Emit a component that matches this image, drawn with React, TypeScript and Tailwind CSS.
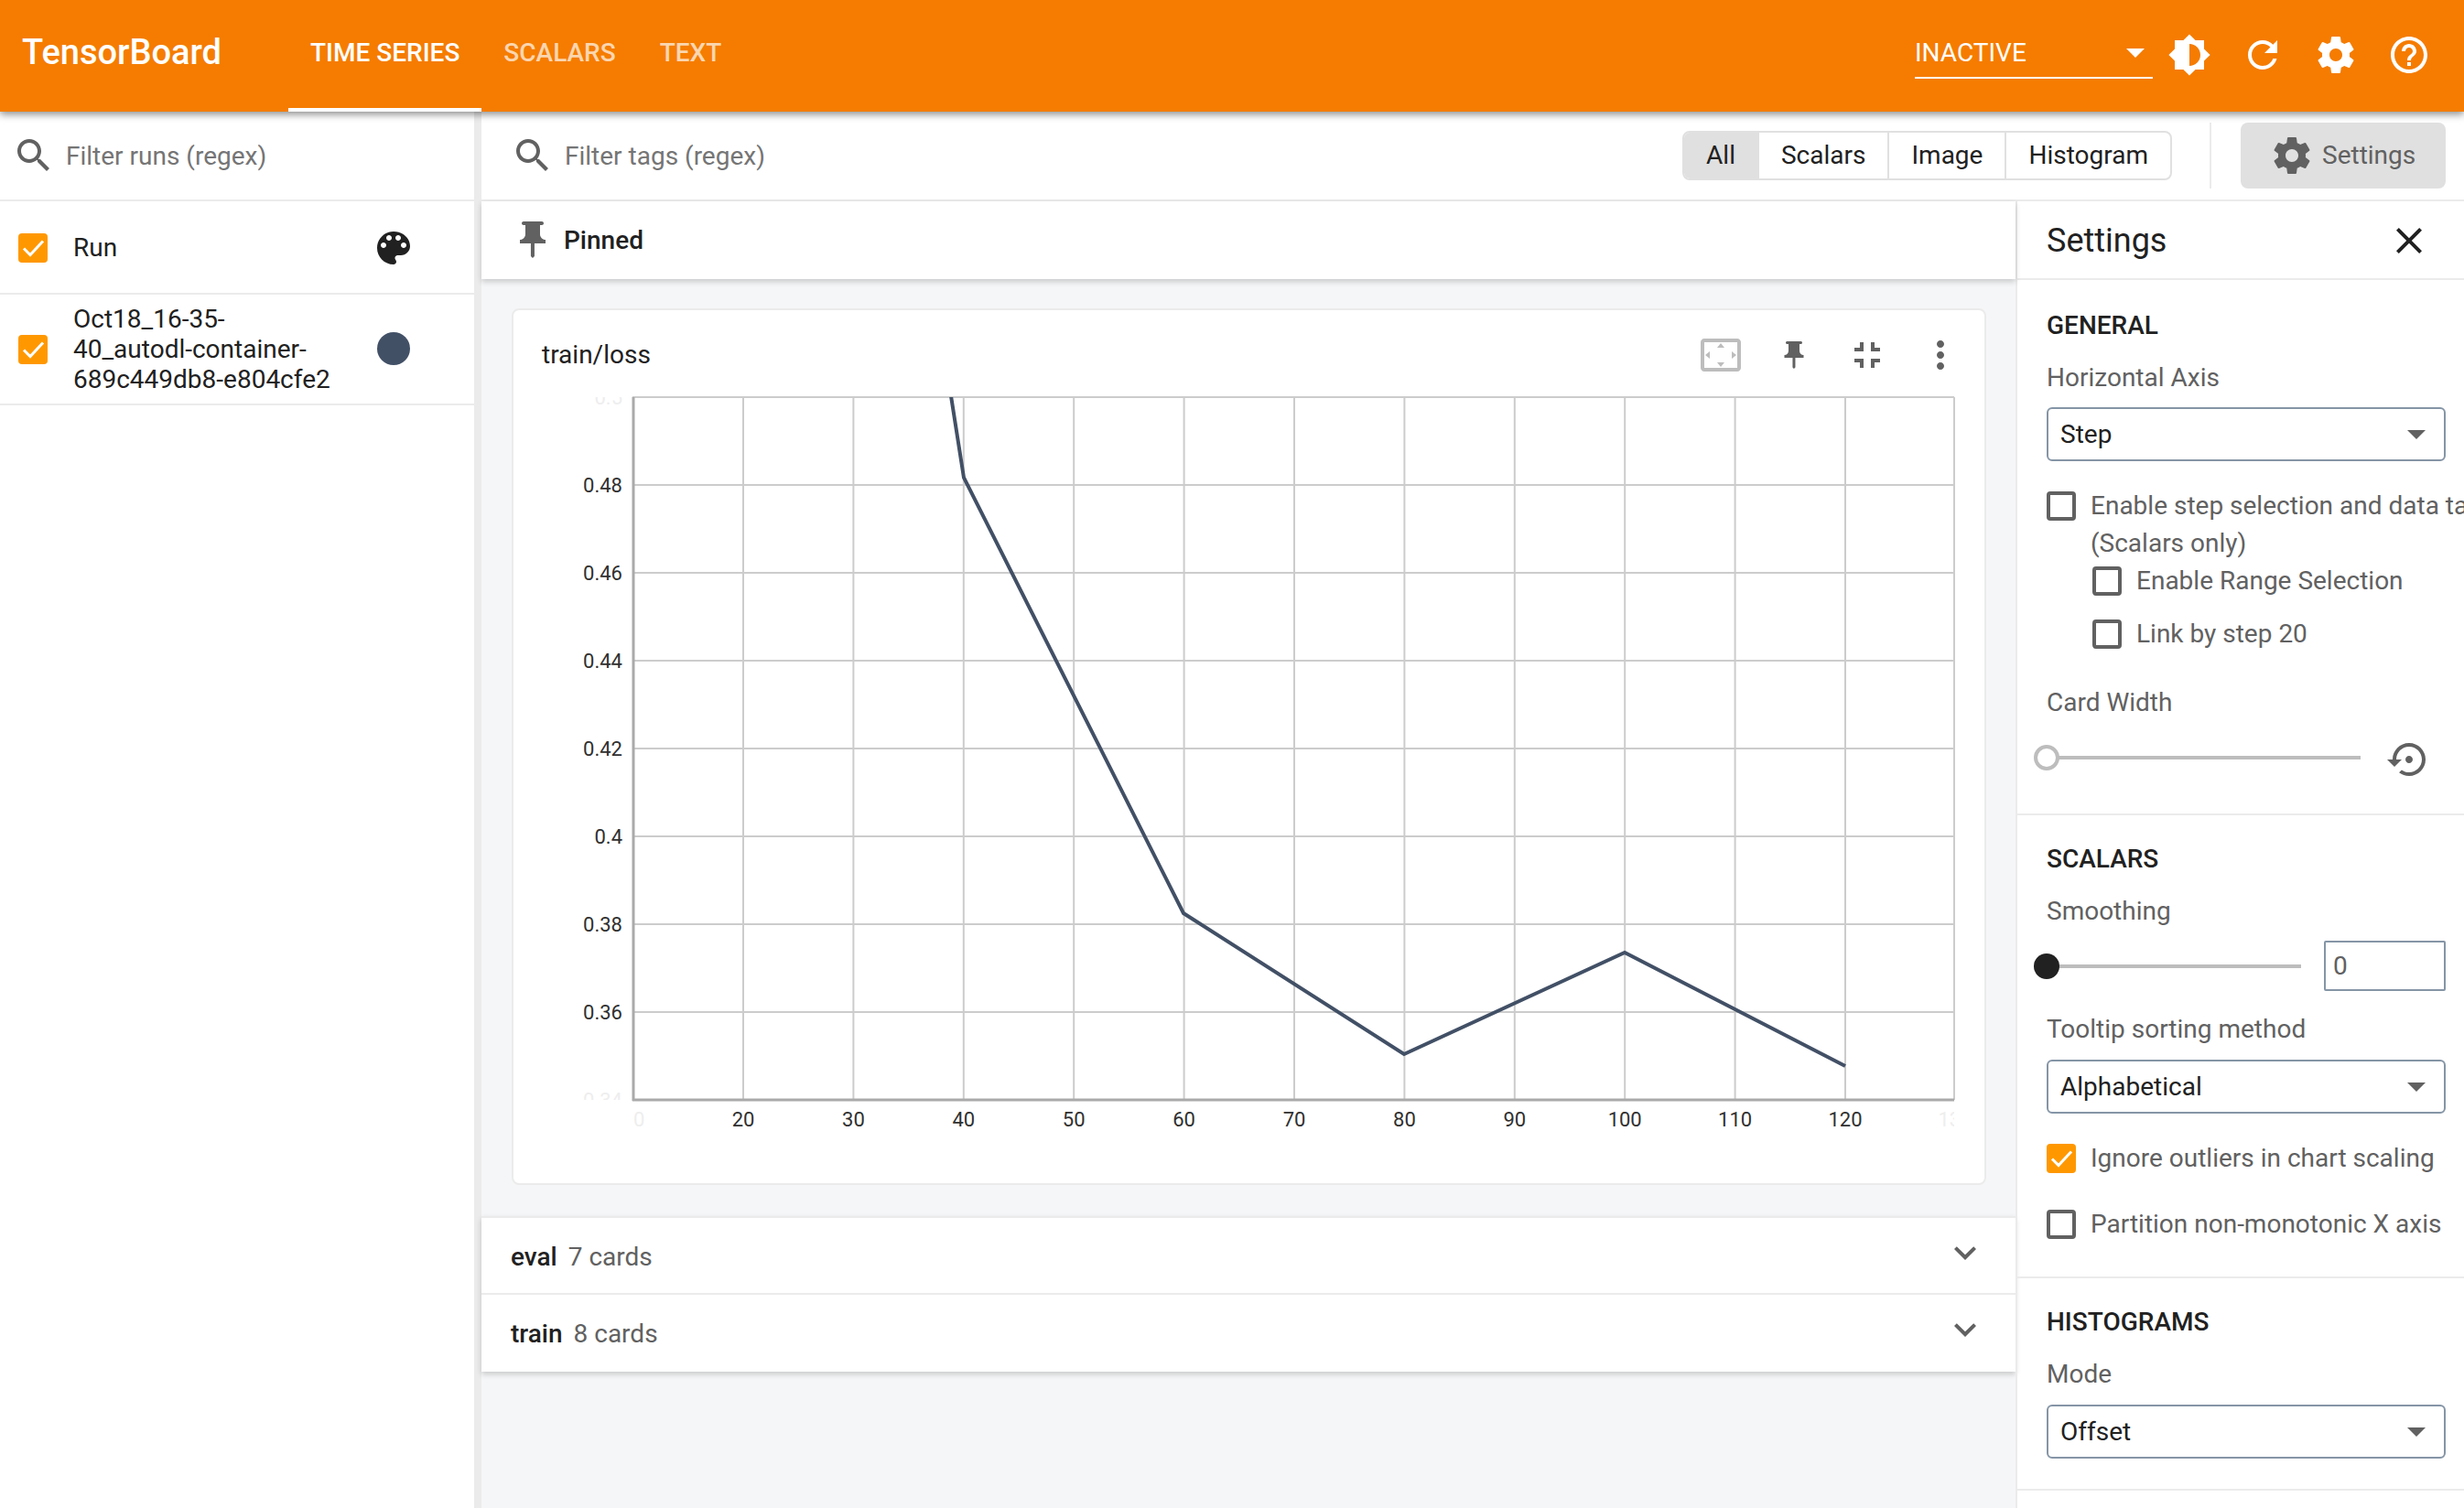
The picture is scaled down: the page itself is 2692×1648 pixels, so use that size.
import type { ReactNode } from 'react';

const paths = {
  search: 'M15.5 14h-.79l-.28-.27C15.41 12.59 16 11.11 16 9.5 16 5.91 13.09 3 9.5 3S3 5.91 3 9.5 5.91 16 9.5 16c1.61 0 3.09-.59 4.23-1.57l.27.28v.79l5 4.99L20.49 19l-4.99-5zm-6 0C7.01 14 5 11.99 5 9.5S7.01 5 9.5 5 14 7.01 14 9.5 11.99 14 9.5 14z',
  brightness: 'M20 15.31L23.31 12 20 8.69V4h-4.69L12 .69 8.69 4H4v4.69L.69 12 4 15.31V20h4.69L12 23.31 15.31 20H20v-4.69zM12 18V6c3.31 0 6 2.69 6 6s-2.69 6-6 6z',
  refresh: 'M17.65 6.35C16.2 4.9 14.21 4 12 4c-4.42 0-7.99 3.58-7.99 8s3.57 8 7.99 8c3.73 0 6.84-2.55 7.73-6h-2.08c-.82 2.33-3.04 4-5.65 4-3.31 0-6-2.69-6-6s2.69-6 6-6c1.66 0 3.14.69 4.22 1.78L13 11h7V4l-2.35 2.35z',
  gear: 'M19.43 12.98c.04-.32.07-.64.07-.98s-.03-.66-.07-.98l2.11-1.65c.19-.15.24-.42.12-.64l-2-3.46c-.12-.22-.39-.3-.61-.22l-2.49 1c-.52-.4-1.08-.73-1.69-.98l-.38-2.65C14.46 2.18 14.25 2 14 2h-4c-.25 0-.46.18-.49.42l-.38 2.65c-.61.25-1.17.59-1.69.98l-2.49-1c-.23-.09-.49 0-.61.22l-2 3.46c-.13.22-.07.49.12.64l2.11 1.65c-.04.32-.07.65-.07.98s.03.66.07.98l-2.11 1.65c-.19.15-.24.42-.12.64l2 3.46c.12.22.39.3.61.22l2.49-1c.52.4 1.08.73 1.69.98l.38 2.65c.03.24.24.42.49.42h4c.25 0 .46-.18.49-.42l.38-2.65c.61-.25 1.17-.59 1.69-.98l2.49 1c.23.09.49 0 .61-.22l2-3.46c.12-.22.07-.49-.12-.64l-2.11-1.65zM12 15.5c-1.93 0-3.5-1.57-3.5-3.5s1.57-3.5 3.5-3.5 3.5 1.57 3.5 3.5-1.57 3.5-3.5 3.5z',
  help: 'M11 18h2v-2h-2v2zm1-16C6.48 2 2 6.48 2 12s4.48 10 10 10 10-4.48 10-10S17.52 2 12 2zm0 18c-4.41 0-8-3.59-8-8s3.59-8 8-8 8 3.59 8 8-3.59 8-8 8zm0-14c-2.21 0-4 1.79-4 4h2c0-1.1.9-2 2-2s2 .9 2 2c0 2-3 1.75-3 5h2c0-2.25 3-2.5 3-5 0-2.21-1.79-4-4-4z',
  palette: 'M12 3c-4.97 0-9 4.03-9 9s4.03 9 9 9c.83 0 1.5-.67 1.5-1.5 0-.39-.15-.74-.39-1.01-.23-.26-.38-.61-.38-.99 0-.83.67-1.5 1.5-1.5H16c2.76 0 5-2.24 5-5 0-4.42-4.03-8-9-8zm-5.5 9c-.83 0-1.5-.67-1.5-1.5S5.67 9 6.5 9 8 9.67 8 10.5 7.33 12 6.5 12zm3-4C8.67 8 8 7.33 8 6.5S8.67 5 9.5 5s1.5.67 1.5 1.5S10.33 8 9.5 8zm5 0c-.83 0-1.5-.67-1.5-1.5S13.67 5 14.5 5s1.5.67 1.5 1.5S15.33 8 14.5 8zm3 4c-.83 0-1.5-.67-1.5-1.5S16.67 9 17.5 9s1.5.67 1.5 1.5-.67 1.5-1.5 1.5z',
  pin: 'M16 9V4l1 0c.55 0 1-.45 1-1s-.45-1-1-1H7C6.45 2 6 2.45 6 3s.45 1 1 1l1 0v5c0 1.66-1.34 3-3 3v2h5.97v7l1 1 1-1v-7H19v-2C17.34 12 16 10.66 16 9z',
  collapse: 'M5 16h3v3h2v-5H5v2zm3-8H5v2h5V5H8v3zm6 11h2v-3h3v-2h-5v5zm2-11V5h-2v5h5V8h-3z',
  more: 'M12 8c1.1 0 2-.9 2-2s-.9-2-2-2-2 .9-2 2 .9 2 2 2zm0 2c-1.1 0-2 .9-2 2s.9 2 2 2 2-.9 2-2-.9-2-2-2zm0 6c-1.1 0-2 .9-2 2s.9 2 2 2 2-.9 2-2-.9-2-2-2z',
  close: 'M19 6.41L17.59 5 12 10.59 6.41 5 5 6.41 10.59 12 5 17.59 6.41 19 12 13.41 17.59 19 19 17.59 13.41 12z',
  chevron: 'M16.59 8.59L12 13.17 7.41 8.59 6 10l6 6 6-6z',
  reset: 'M14 12c0-1.1-.9-2-2-2s-2 .9-2 2 .9 2 2 2 2-.9 2-2zm-2-9c-4.97 0-9 4.03-9 9H0l4 4 4-4H5c0-3.87 3.13-7 7-7s7 3.13 7 7-3.13 7-7 7c-1.51 0-2.91-.49-4.06-1.3l-1.42 1.44C8.04 20.3 9.94 21 12 21c4.97 0 9-4.03 9-9s-4.03-9-9-9z',
  overscan: 'M12.01 5.5L10 8h4l-1.99-2.5zM18 10v4l2.5-1.99L18 10zM6 10l-2.5 2.01L6 14v-4zm8 6h-4l2.01 2.5L14 16zm7-13H3c-1.1 0-2 .9-2 2v14c0 1.1.9 2 2 2h18c1.1 0 2-.9 2-2V5c0-1.1-.9-2-2-2zm0 16.01H3V4.99h18v14.02z',
};

function Icon({ name, className }: { name: keyof typeof paths; className: string }) {
  return (
    <svg viewBox="0 0 24 24" className={className} fill="currentColor">
      <path d={paths[name]} />
    </svg>
  );
}

function Checkbox({ checked = false }: { checked?: boolean }) {
  if (checked) {
    return (
      <span className="block w-[32px] h-[32px] shrink-0 rounded-[4px] bg-[#ff9800]">
        <svg viewBox="0 0 32 32" className="w-[32px] h-[32px]" fill="none" stroke="#fff" strokeWidth="3">
          <path d="M6 16.5 L13 23.5 L27 8.5" />
        </svg>
      </span>
    );
  }
  return <span className="block w-[32px] h-[32px] shrink-0 rounded-[4px] border-[4px] border-[#616161] bg-white" />;
}

function SelectBox({ value, className }: { value: string; className: string }) {
  return (
    <div className={`h-[59px] w-[436px] rounded-[6px] border-2 border-[#8595a6] flex items-center justify-between pl-[13px] pr-[20px] text-[#212121] ${className}`}>
      <span>{value}</span>
      <span className="w-0 h-0 border-l-[10px] border-r-[10px] border-t-[10px] border-l-transparent border-r-transparent border-t-[#616161]" />
    </div>
  );
}

function Heading({ children }: { children: ReactNode }) {
  return <div className="h-[36px] leading-[36px] font-medium text-[#212121]">{children}</div>;
}

function Label({ children, className }: { children: ReactNode; className: string }) {
  return <div className={`h-[36px] leading-[36px] text-[#616161] ${className}`}>{children}</div>;
}

function CheckRow({ label, checked, className }: { label: string; checked?: boolean; className: string }) {
  return (
    <div className={`flex items-start gap-[16px] leading-[41px] text-[#616161] whitespace-nowrap ${className}`}>
      <div className="pt-[5px]">
        <Checkbox checked={checked} />
      </div>
      <span>{label}</span>
    </div>
  );
}

function TagFilter({ label, active, last }: { label: string; active?: boolean; last?: boolean }) {
  return (
    <div className={`h-full px-[24px] flex items-center text-[#212121] ${active ? 'bg-[#e0e0e0]' : ''} ${last ? '' : 'border-r-2 border-[#e0e0e0]'}`}>
      {label}
    </div>
  );
}

function Group({ name, count, className }: { name: string; count: string; className: string }) {
  return (
    <div className={`h-[84px] flex items-center pl-[32px] pr-[31px] ${className}`}>
      <span className="font-medium text-[#212121] mr-[12px]">{name}</span>
      <span className="text-[#616161]">{count}</span>
      <Icon name="chevron" className="w-[48px] h-[48px] ml-auto text-[#616161] -mt-[10px]" />
    </div>
  );
}

const yTicks = [
  { label: '0.48', y: 530 },
  { label: '0.46', y: 626 },
  { label: '0.44', y: 722 },
  { label: '0.42', y: 818 },
  { label: '0.4', y: 914 },
  { label: '0.38', y: 1010 },
  { label: '0.36', y: 1106 },
];
const xTicks = [20, 30, 40, 50, 60, 70, 80, 90, 100, 110, 120];
const xOf = (v: number) => 812 + (v - 20) * 12.04;

function LossChart() {
  return (
    <svg viewBox="561 420 1606 820" className="w-[1606px] h-[820px] block" style={{ fontFamily: 'Roboto, sans-serif' }}>
      <defs>
        <clipPath id="plot-y"><rect x="561" y="434" width="130" height="768" /></clipPath>
        <clipPath id="plot-x"><rect x="691" y="1204" width="1444" height="40" /></clipPath>
        <clipPath id="plot-line"><rect x="691" y="434" width="1444" height="768" /></clipPath>
      </defs>
      {yTicks.map(t => (
        <line key={t.label} x1="691" x2="2135" y1={t.y} y2={t.y} stroke="#cccccc" strokeWidth="2" />
      ))}
      {xTicks.map(t => (
        <line key={t} x1={xOf(t)} x2={xOf(t)} y1="434" y2="1202" stroke="#cccccc" strokeWidth="2" />
      ))}
      <line x1="691" x2="2135" y1="434" y2="434" stroke="#cccccc" strokeWidth="2" />
      <line x1="2135" x2="2135" y1="434" y2="1202" stroke="#cccccc" strokeWidth="2" />
      <line x1="692" x2="692" y1="434" y2="1203" stroke="#aaaaaa" strokeWidth="3" />
      <line x1="691" x2="2135" y1="1202" y2="1202" stroke="#aaaaaa" strokeWidth="3" />
      <polyline
        clipPath="url(#plot-line)"
        points="1037,420 1053,522 1293,998 1534,1152 1775,1041 2016,1165"
        fill="none"
        stroke="#425066"
        strokeWidth="4"
      />
      <g fontSize="22" fill="#303030" textAnchor="end">
        {yTicks.map(t => (
          <text key={t.label} x="680" y={t.y + 8}>{t.label}</text>
        ))}
      </g>
      <g clipPath="url(#plot-y)" fontSize="22" fill="#eeeeee" textAnchor="end">
        <text x="680" y="442">0.5</text>
        <text x="680" y="1210">0.34</text>
      </g>
      <g fontSize="22" fill="#303030" textAnchor="middle">
        {xTicks.map(t => (
          <text key={t} x={xOf(t)} y="1231">{t}</text>
        ))}
      </g>
      <g clipPath="url(#plot-x)" fontSize="22" fill="#eeeeee" textAnchor="middle">
        <text x="692" y="1231">10</text>
        <text x="2136" y="1231">130</text>
      </g>
    </svg>
  );
}

export default function App() {
  return (
    <div className="w-[2692px] h-[1648px] flex flex-col overflow-hidden bg-white text-[28px] font-['Roboto',sans-serif]">
      <header className="relative z-20 h-[122px] shrink-0 bg-[#f57c00] text-white flex items-start shadow-[0_3px_8px_rgba(0,0,0,0.45)]">
        <div className="pl-[24px] w-[315px] h-[114px] flex items-center text-[38px] font-medium">TensorBoard</div>
        <div className="h-[122px] px-[24px] pb-[2px] flex items-center font-medium border-b-[4px] border-white">TIME SERIES</div>
        <div className="h-[122px] px-[24px] pb-[6px] flex items-center font-medium text-white/70">SCALARS</div>
        <div className="h-[122px] px-[24px] pb-[6px] flex items-center font-medium text-white/70">TEXT</div>
        <div className="ml-auto flex items-center pr-[36px] h-[120px]">
          <div className="w-[260px] h-[48px] mt-[4px] mr-[16px] border-b-2 border-white flex items-center justify-between pr-[9px] pb-[6px]">
            <span>INACTIVE</span>
            <span className="w-0 h-0 border-l-[10px] border-r-[10px] border-t-[10px] border-l-transparent border-r-transparent border-t-white" />
          </div>
          <Icon name="brightness" className="w-[48px] h-[48px] mr-[32px]" />
          <Icon name="refresh" className="w-[48px] h-[48px] mr-[32px]" />
          <Icon name="gear" className="w-[48px] h-[48px] mr-[32px]" />
          <Icon name="help" className="w-[48px] h-[48px]" />
        </div>
      </header>

      <div className="flex flex-1 min-h-0">
        <aside className="w-[518px] shrink-0 flex flex-col">
          <div className="h-[98px] border-b-2 border-[#ebebeb] flex items-center pl-[13px] text-[#757575]">
            <Icon name="search" className="w-[48px] h-[48px] text-[#616161] mr-[11px]" />
            <span className="mt-[2px]">Filter runs (regex)</span>
          </div>
          <div className="h-[102px] border-b-2 border-[#ebebeb] flex items-center pl-[20px] pr-[64px] pt-[2px] text-[#212121]">
            <Checkbox checked />
            <span className="ml-[28px]">Run</span>
            <Icon name="palette" className="w-[48px] h-[48px] ml-auto" />
          </div>
          <div className="h-[121px] border-b-2 border-[#ebebeb] flex items-center pl-[20px] pr-[70px] text-[#212121]">
            <Checkbox checked />
            <span className="ml-[28px] leading-[33px] w-[300px]">Oct18_16-35-<br />40_autodl-container-<br />689c449db8-e804cfe2</span>
            <span className="ml-auto w-[36px] h-[36px] rounded-full bg-[#425066] -mt-[2px]" />
          </div>
        </aside>
        <div className="w-[8px] shrink-0 bg-[#ebebeb]" />

        <main className="flex-1 min-w-0 flex flex-col">
          <div className="h-[98px] shrink-0 border-b-2 border-[#ebebeb] flex items-center pl-[32px] pr-[20px]">
            <Icon name="search" className="w-[48px] h-[48px] text-[#616161] mr-[11px]" />
            <span className="text-[#757575] mt-[2px]">Filter tags (regex)</span>
            <div className="ml-auto h-[54px] flex items-center rounded-[8px] border-2 border-[#e0e0e0] overflow-hidden">
              <TagFilter label="All" active />
              <TagFilter label="Scalars" />
              <TagFilter label="Image" />
              <TagFilter label="Histogram" last />
            </div>
            <div className="w-[2px] h-[72px] bg-[#ebebeb] ml-[41px] mr-[32px]" />
            <div className="w-[224px] h-[72px] rounded-[8px] bg-[#e0e0e0] flex items-center pl-[32px] text-[#616161]">
              <Icon name="gear" className="w-[48px] h-[48px] mr-[9px]" />
              Settings
            </div>
          </div>

          <div className="flex flex-1 min-h-0">
            <section className="w-[1676px] shrink-0 bg-[#f5f6f7] flex flex-col">
              <div className="relative z-10 h-[85px] shrink-0 bg-white flex items-center pl-[32px] shadow-[0_3px_6px_rgba(0,0,0,0.18)]">
                <Icon name="pin" className="w-[48px] h-[48px] text-[#616161] mr-[10px] -mt-[2px]" />
                <span className="font-medium text-[#212121]">Pinned</span>
              </div>
              <div className="mt-[32px] ml-[33px] mr-[32px] h-[958px] shrink-0 rounded-[8px] border-2 border-[#ebebeb] bg-white">
                <div className="h-[81px] flex items-center pl-[31px] pr-[24px] pt-[17px]">
                  <span className="text-[#212121]">train/loss</span>
                  <Icon name="overscan" className="w-[48px] h-[48px] text-[#bdbdbd] ml-auto mr-[32px]" />
                  <div className="w-[48px] h-[48px] flex items-center justify-center mr-[32px]">
                    <Icon name="pin" className="w-[36px] h-[36px] text-[#616161]" />
                  </div>
                  <Icon name="collapse" className="w-[48px] h-[48px] text-[#616161] mr-[32px]" />
                  <Icon name="more" className="w-[48px] h-[48px] text-[#616161]" />
                </div>
                <LossChart />
              </div>
              <div className="mt-[34px] shrink-0 bg-white border-t-2 border-[#ebebeb] shadow-[0_3px_6px_rgba(0,0,0,0.18)]">
                <Group name="eval" count="7 cards" className="border-b-2 border-[#ebebeb] pt-[4px]" />
                <Group name="train" count="8 cards" className="pt-[2px]" />
              </div>
            </section>

            <section className="flex-1 min-w-0 border-l-2 border-[#ebebeb] overflow-hidden flex flex-col">
              <div className="h-[86px] shrink-0 border-b-2 border-[#ebebeb] flex items-center pl-[32px] pr-[36px] pt-[2px] text-[36px] text-[#212121]">
                Settings
                <Icon name="close" className="w-[48px] h-[48px] ml-auto" />
              </div>

              <div className="shrink-0 border-b-2 border-[#ebebeb] pl-[32px] pt-[32px] pb-[41px]">
                <Heading>GENERAL</Heading>
                <Label className="mt-[21px]">Horizontal Axis</Label>
                <SelectBox value="Step" className="mt-[14px]" />
                <CheckRow label="Enable step selection and data table" className="mt-[28px]" />
                <div className="pl-[48px] leading-[41px] text-[#616161]">(Scalars only)</div>
                <CheckRow label="Enable Range Selection" className="ml-[50px]" />
                <CheckRow label="Link by step 20" className="ml-[50px] mt-[17px]" />
                <Label className="mt-[37px]">Card Width</Label>
                <div className="mt-[22px] h-[40px] flex items-center">
                  <div className="relative w-[343px] h-[4px] bg-[#bdbdbd]">
                    <span className="absolute -left-[14px] -top-[12px] w-[28px] h-[28px] rounded-full bg-white border-[4px] border-[#bdbdbd]" />
                  </div>
                  <Icon name="reset" className="w-[48px] h-[48px] ml-[29px] text-[#616161] mt-[4px]" />
                </div>
              </div>

              <div className="shrink-0 border-b-2 border-[#ebebeb] pl-[32px] pt-[30px] pb-[37px]">
                <Heading>SCALARS</Heading>
                <Label className="mt-[21px]">Smoothing</Label>
                <div className="mt-[14px] flex items-center">
                  <div className="relative w-[278px] h-[4px] bg-[#bdbdbd]">
                    <span className="absolute -left-[14px] -top-[12px] w-[28px] h-[28px] rounded-full bg-[#212121]" />
                  </div>
                  <div className="ml-[25px] w-[133px] h-[55px] border-2 border-[#8595a6] rounded-[2px] flex items-center pl-[8px] text-[#616161]">0</div>
                </div>
                <Label className="mt-[24px]">Tooltip sorting method</Label>
                <SelectBox value="Alphabetical" className="mt-[15px]" />
                <CheckRow label="Ignore outliers in chart scaling" checked className="mt-[28px]" />
                <CheckRow label="Partition non-monotonic X axis" className="mt-[31px]" />
              </div>

              <div className="shrink-0 border-b-2 border-[#ebebeb] pl-[32px] pt-[30px] pb-[33px]">
                <Heading>HISTOGRAMS</Heading>
                <Label className="mt-[21px]">Mode</Label>
                <SelectBox value="Offset" className="mt-[15px]" />
              </div>
            </section>
          </div>
        </main>
      </div>
    </div>
  );
}
